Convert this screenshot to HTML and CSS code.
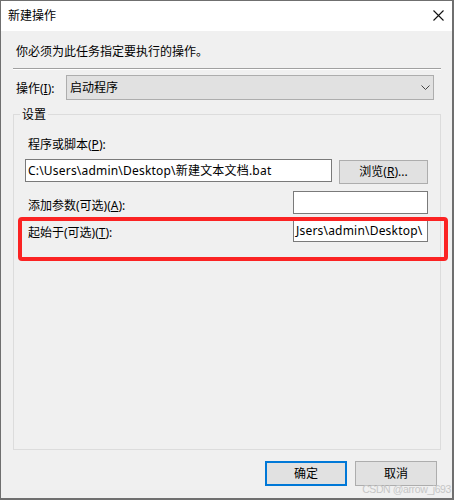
FILE: index.html
```html
<!DOCTYPE html>
<html lang="zh-CN">
<head>
<meta charset="utf-8">
<title>新建操作</title>
<link rel="stylesheet" href="styles.css">
</head>
<body>
<div class="window">
  <div class="titlebar">
    <span class="title">新建操作</span>
    <svg class="close" width="11" height="11" viewBox="0 0 11 11"><path d="M0.5 0.5L10.5 10.5M10.5 0.5L0.5 10.5" stroke="#111" stroke-width="1.1" fill="none"/></svg>
  </div>
  <div class="content">
    <p class="desc">你必须为此任务指定要执行的操作。</p>
    <div class="sep"></div>
    <div class="op-row">
      <span class="op-label">操作(<u>I</u>):</span>
      <div class="combo">
        <span>启动程序</span>
        <svg width="9" height="6" viewBox="0 0 9 6"><path d="M0.5 0.5L4.5 4.5L8.5 0.5" stroke="#444" stroke-width="1" fill="none"/></svg>
      </div>
    </div>
    <fieldset class="group">
      <legend>设置</legend>
      <div class="group-inner">
        <div class="lbl top-lbl">程序或脚本(<u>P</u>):</div>
        <div class="prog-row">
          <div class="input wide">C:\Users\admin\Desktop\新建文本文档.bat</div>
          <div class="btn browse">浏览(<u>R</u>)...</div>
        </div>
        <div class="field-row row-args">
          <span class="lbl">添加参数(可选)(<u>A</u>):</span>
          <div class="input short"></div>
        </div>
        <div class="field-row row-start">
          <span class="lbl">起始于(可选)(<u>T</u>):</span>
          <div class="input short">Jsers\admin\Desktop\</div>
        </div>
      </div>
    </fieldset>
    <div class="footer">
      <div class="btn ok">确定</div>
      <div class="btn cancel">取消</div>
    </div>
  </div>
  <div class="highlight"></div>
  <div class="watermark">CSDN @arrow_j693</div>
</div>
</body>
</html>
```
FILE: styles.css
```css
* { box-sizing: border-box; }
html, body { margin: 0; padding: 0; background: #f0f0f0; }
body {
  font-family: "Noto Sans", "Noto Sans CJK SC", sans-serif;
  font-size: 12px;
  color: #000;
}
u { text-decoration: underline; text-underline-offset: 1px; }

.window {
  position: relative;
  width: 454px;
  height: 500px;
  border: 1px solid #6f6f6f;
  border-right-width: 2px;
  border-bottom-width: 2px;
  background: #f0f0f0;
  display: flex;
  flex-direction: column;
}

.titlebar {
  height: 30px;
  background: #fff;
  display: flex;
  align-items: center;
  justify-content: space-between;
  padding: 0 8px 0 7px;
}
.title { line-height: 16px; margin-top: -1px; }
.close { display: block; margin-top: -1px; }

.content {
  flex: 1;
  padding: 0 0 0 12px;
  display: flex;
  flex-direction: column;
}

.desc {
  margin: 13px 0 0 3px;
  line-height: 16px;
}

.sep {
  width: 428px;
  height: 2px;
  margin-top: 8px;
  border-top: 1px solid #a0a0a0;
  border-bottom: 1px solid #fff;
}

.op-row {
  display: flex;
  align-items: center;
  margin-top: 5px;
  padding-left: 3px;
}
.op-label {
  width: 50px;
  line-height: 16px;
  padding-top: 2px;
}
.combo {
  width: 368px;
  height: 25px;
  background: #e1e1e1;
  border: 1px solid #adadad;
  display: flex;
  align-items: center;
  justify-content: space-between;
  padding: 0 3px 0 3px;
}
.combo span { line-height: 16px; }
.combo svg { display: block; margin-top: 1px; }

.group {
  width: 428px;
  height: 343px;
  margin: 7px 0 0 0;
  padding: 0;
  border: 1px solid #dcdcdc;
  min-width: 0;
}
.group legend {
  margin-left: 6px;
  padding: 0 2px;
  line-height: 15px;
}
.group-inner {
  padding: 0 12px 0 11px;
  display: flex;
  flex-direction: column;
}

.lbl { line-height: 16px; }
.top-lbl { margin: 15px 0 0 3px; }

.prog-row {
  display: flex;
  align-items: flex-start;
  gap: 7px;
  margin-top: 6px;
}

.input {
  height: 23px;
  background: #fff;
  border: 1px solid #7a7a7a;
  padding: 0 2px;
  line-height: 21px;
  white-space: nowrap;
  overflow: hidden;
  letter-spacing: 0.2px;
}
.input.wide { width: 307px; }
.input.short { width: 135px; }

.btn {
  background: #e1e1e1;
  border: 1px solid #adadad;
  display: flex;
  align-items: center;
  justify-content: center;
  line-height: 16px;
}
.browse {
  width: 89px;
  height: 24px;
  margin-top: 1px;
}

.field-row {
  display: flex;
  align-items: flex-start;
  justify-content: space-between;
}
.field-row .lbl { margin: 7px 0 0 3px; }
.row-args { margin-top: 7px; }
.row-start { margin-top: 5px; }
.row-start .lbl { margin-top: 6px; }

.footer {
  display: flex;
  justify-content: flex-end;
  gap: 8px;
  margin-top: 11px;
  padding-right: 15px;
}
.footer .btn {
  width: 82px;
  height: 25px;
}
.footer .ok { border: 2px solid #0078d7; }

.highlight {
  position: absolute;
  left: 17px;
  top: 216px;
  width: 430px;
  height: 44px;
  border: 4px solid #fb2323;
  border-radius: 4px;
}

.watermark {
  position: absolute;
  right: 1px;
  bottom: 3px;
  font-family: "Liberation Sans", Arial, sans-serif;
  font-size: 10.5px;
  letter-spacing: -0.4px;
  line-height: 12px;
  color: #c6c6c6;
}
```
